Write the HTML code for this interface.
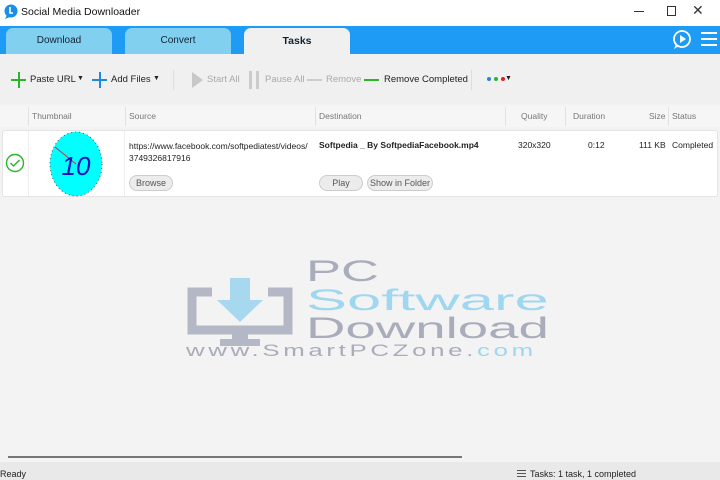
<!DOCTYPE html>
<html><head><style>
*{margin:0;padding:0;box-sizing:border-box}
body{width:720px;height:480px;overflow:hidden;background:#f3f3f3;font-family:"Liberation Sans",sans-serif;font-size:9px;color:#222;position:relative}
.a{position:absolute}
.tab{position:absolute;top:28px;height:26px;width:106px;border-radius:7px 7px 0 0;text-align:center;line-height:26px;font-size:10px;color:#123}
.btn{position:absolute;height:16px;border:1px solid #ccc;border-radius:8px;background:#ececec;font-size:9px;color:#555;text-align:center;line-height:14px}
.h{position:absolute;top:111px;font-size:8.5px;color:#777}
.sep{position:absolute;top:107px;width:1px;height:19px;background:#e2e2e2}
.w{position:absolute;left:306px;font-size:30px;line-height:30px;transform-origin:0 0;white-space:nowrap}
</style></head><body>
<div class="a" style="left:0;top:0;width:720px;height:26px;background:#fff"></div>
<svg class="a" style="left:4px;top:4px" width="14" height="16"><circle cx="7" cy="7" r="6.5" fill="#1a8ee8"/><path d="M3 11 L1 15 L6 13Z" fill="#1a8ee8"/><path d="M6 3v6h3" stroke="#fff" stroke-width="1.6" fill="none"/></svg>
<div class="a" style="left:21px;top:6px;font-size:10.5px;color:#111">Social Media Downloader</div>
<div class="a" style="left:634px;top:11px;width:10px;height:1px;background:#333"></div>
<div class="a" style="left:667px;top:6px;width:9px;height:10px;border:1px solid #333"></div>
<div class="a" style="left:692px;top:2px;font-size:14px;color:#333">✕</div>
<div class="a" style="left:0;top:26px;width:720px;height:28px;background:#1e9cf5"></div>
<div class="tab" style="left:6px;background:#82d0f0">Download</div>
<div class="tab" style="left:125px;background:#82d0f0">Convert</div>
<div class="tab" style="left:244px;background:#f0f0f0;font-weight:bold;font-size:10.5px">Tasks</div>
<svg class="a" style="left:672px;top:29px" width="20" height="22"><circle cx="10" cy="10" r="8" fill="none" stroke="#fff" stroke-width="1.8"/><path d="M4 15l-2 5 5-3" fill="#fff"/><path d="M8 6v8l6-4z" fill="#fff"/></svg>
<div class="a" style="left:701px;top:32px;width:16px;height:2px;background:#fff;box-shadow:0 6px #fff,0 12px #fff"></div>
<div class="a" style="left:0;top:54px;width:720px;height:50px;background:#f0f0f0"></div>
<div class="a" style="left:11px;top:79px;width:15px;height:2px;background:#2bb52b"></div><div class="a" style="left:18px;top:72px;width:2px;height:16px;background:#2bb52b"></div>
<div class="a" style="left:30px;top:74px;font-size:9.5px">Paste URL</div><div class="a" style="left:77px;top:75px;font-size:7px">▼</div>
<div class="a" style="left:92px;top:79px;width:15px;height:2px;background:#1e88e5"></div><div class="a" style="left:99px;top:72px;width:2px;height:16px;background:#1e88e5"></div>
<div class="a" style="left:111px;top:74px;font-size:9.5px">Add Files</div><div class="a" style="left:153px;top:75px;font-size:7px">▼</div>
<div class="a" style="left:173px;top:70px;width:1px;height:20px;background:#ddd"></div>
<svg class="a" style="left:192px;top:72px" width="12" height="16"><path d="M0 0L11 8L0 16Z" fill="#c8c8c8"/></svg>
<div class="a" style="left:207px;top:74px;font-size:9.5px;color:#aaa">Start All</div>
<div class="a" style="left:249px;top:71px;width:3px;height:18px;background:#ccc"></div><div class="a" style="left:256px;top:71px;width:3px;height:18px;background:#ccc"></div>
<div class="a" style="left:265px;top:74px;font-size:9.5px;color:#aaa">Pause All</div>
<div class="a" style="left:307px;top:79px;width:15px;height:2px;background:#ccc"></div>
<div class="a" style="left:326px;top:74px;font-size:9.5px;color:#aaa">Remove</div>
<div class="a" style="left:364px;top:79px;width:15px;height:2px;background:#2bb52b"></div>
<div class="a" style="left:384px;top:74px;font-size:9.5px">Remove Completed</div>
<div class="a" style="left:471px;top:70px;width:1px;height:20px;background:#ddd"></div>
<div class="a" style="left:487px;top:77px;width:4px;height:4px;border-radius:2px;background:#1e88e5"></div>
<div class="a" style="left:494px;top:77px;width:4px;height:4px;border-radius:2px;background:#2bb52b"></div>
<div class="a" style="left:501px;top:77px;width:4px;height:4px;border-radius:2px;background:#e52020"></div>
<div class="a" style="left:505px;top:75px;font-size:7px">▼</div>
<div class="a" style="left:0;top:106px;width:720px;height:21px;background:#f6f6f6"></div>
<div class="sep" style="left:28px"></div><div class="sep" style="left:125px"></div><div class="sep" style="left:315px"></div><div class="sep" style="left:505px"></div><div class="sep" style="left:565px"></div><div class="sep" style="left:668px"></div>
<div class="h" style="left:32px">Thumbnail</div><div class="h" style="left:129px">Source</div><div class="h" style="left:319px">Destination</div>
<div class="h" style="left:521px">Quality</div><div class="h" style="left:573px">Duration</div><div class="h" style="left:649px">Size</div><div class="h" style="left:672px">Status</div>
<div class="a" style="left:2px;top:130px;width:716px;height:67px;background:#fff;border:1px solid #e4e4e4;border-radius:3px"></div>
<div class="a" style="left:28px;top:131px;width:1px;height:65px;background:#eee"></div>
<div class="a" style="left:124px;top:131px;width:1px;height:65px;background:#eee"></div>
<svg class="a" style="left:5px;top:153px" width="20" height="20"><circle cx="10" cy="10" r="8.5" fill="none" stroke="#2bb52b" stroke-width="1.4"/><path d="M5.5 10l3 3 6-6" fill="none" stroke="#2bb52b" stroke-width="1.5"/></svg>
<svg class="a" style="left:49px;top:131px" width="56" height="66"><ellipse cx="27" cy="33" rx="26" ry="32" fill="#00ffff" stroke="#555" stroke-dasharray="1 3"/><line x1="6" y1="16" x2="27" y2="33" stroke="#c33" stroke-width="1"/><text x="27" y="44" text-anchor="middle" font-size="26" font-style="italic" fill="#1010c0" font-family="Liberation Sans">10</text></svg>
<div class="a" style="left:129px;top:140px;font-size:8.5px;line-height:12px">https://www.facebook.com/softpediatest/videos/<br>3749326817916</div>
<div class="btn" style="left:129px;top:175px;width:44px">Browse</div>
<div class="a" style="left:319px;top:140px;font-size:8.5px;font-weight:bold">Softpedia _ By SoftpediaFacebook.mp4</div>
<div class="btn" style="left:319px;top:175px;width:44px">Play</div>
<div class="btn" style="left:367px;top:175px;width:66px">Show in Folder</div>
<div class="a" style="left:518px;top:140px;font-size:8.5px">320x320</div>
<div class="a" style="left:588px;top:140px;font-size:8.5px">0:12</div>
<div class="a" style="left:639px;top:140px;font-size:8.5px">111 KB</div>
<div class="a" style="left:672px;top:140px;font-size:8.5px">Completed</div>
<svg class="a" style="left:186px;top:276px" width="108" height="74"><path d="M26 16H6v38h96V16H82" fill="none" stroke="#b4b8c6" stroke-width="9"/><rect x="46" y="56" width="16" height="8" fill="#b4b8c6"/><rect x="34" y="63" width="40" height="7" fill="#b4b8c6"/><path d="M44 2h20v22h13L54 46 31 24h13z" fill="#a8d8f0"/></svg>
<div class="w" style="top:257px;color:#a9acbb;transform:scaleX(1.75)">PC</div>
<div class="w" style="top:286px;color:#9fd6f0;transform:scaleX(2.05)">Software</div>
<div class="w" style="top:314px;color:#a9acbb;transform:scaleX(1.82)">Download</div>
<div class="a" style="left:186px;top:342px;font-size:17px;line-height:18px;color:#a9acbb;letter-spacing:2.4px;transform:scaleX(1.52);transform-origin:0 0;white-space:nowrap">www.SmartPCZone.<span style="color:#9fd6f0">com</span></div>
<div class="a" style="left:8px;top:456px;width:454px;height:2px;background:#777"></div>
<div class="a" style="left:0;top:462px;width:720px;height:18px;background:#e9e9e9"></div>
<div class="a" style="left:0;top:469px;font-size:9px">Ready</div>
<div class="a" style="left:517px;top:470px;width:9px;height:1px;background:#555;box-shadow:0 3px #555,0 6px #555"></div>
<div class="a" style="left:530px;top:469px;font-size:9px">Tasks: 1 task, 1 completed</div>
</body></html>
